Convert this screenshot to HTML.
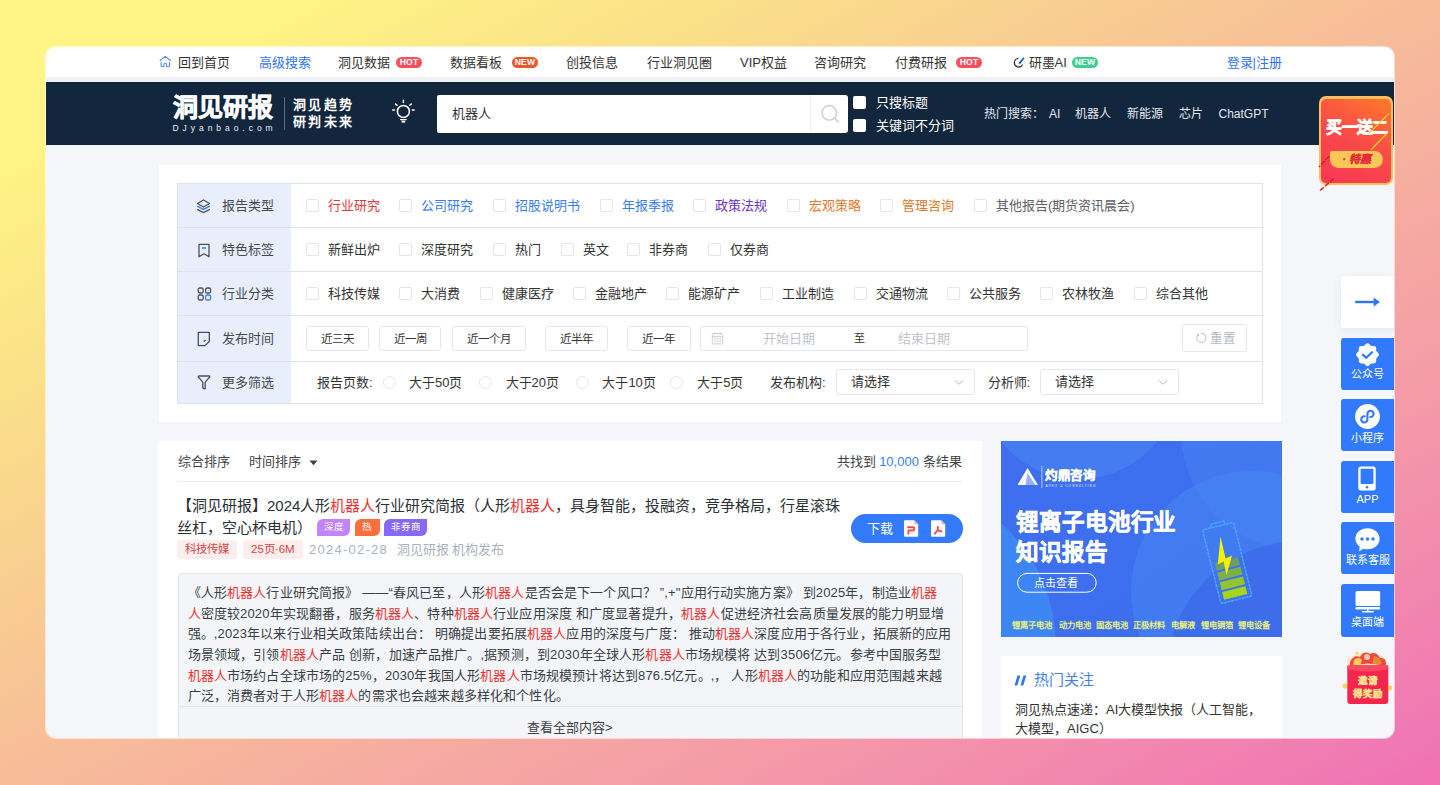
<!DOCTYPE html>
<html lang="zh-CN"><head><meta charset="utf-8">
<style>
*{box-sizing:border-box;margin:0;padding:0}
html,body{width:1440px;height:785px;overflow:hidden}
body{font-family:"Liberation Sans",sans-serif;background:linear-gradient(to bottom right,#fef586 0%,#fef384 11%,#fce987 18.3%,#fadf89 26%,#f7bc99 50%,#f49aa8 75%,#f078b3 96%,#f070b4 100%);position:relative;color:#333}
.win{position:absolute;left:46.3px;top:46.8px;width:1347.4px;height:691px;border-radius:10px;overflow:hidden;background:#f4f6f9;box-shadow:0 0 0 1px rgba(255,255,255,.55)}
.pg{position:absolute;left:-46.3px;top:-46.8px;width:1440px;height:785px}
.a{position:absolute;white-space:nowrap}
/* top nav */
.nav{position:absolute;left:46px;top:47px;width:1348px;height:30px;background:#fff}
.navgap{position:absolute;left:46px;top:77px;width:1348px;height:5px;background:#eef0f4}
.nv{position:absolute;top:55px;font-size:13px;line-height:16px;color:#333}
.badge{position:absolute;top:57px;height:10.5px;border-radius:6px;color:#fff;font-size:8.6px;line-height:11px;font-weight:bold;text-align:center;letter-spacing:.2px}
.hdr{position:absolute;left:46px;top:82px;width:1348px;height:63px;background:#12263e}
.hs{position:absolute;top:106px;font-size:12px;line-height:17px;color:#e3e7ee;white-space:nowrap}
.panel{position:absolute;left:158.5px;top:165px;width:1122.5px;height:257px;background:#fff}
.tbl{position:absolute;left:177.5px;top:183.5px;width:1085px;height:220.5px;border:1px solid #dfe4ee}
.lab{position:absolute;left:0;width:113.5px;background:#e8eefb}
.row{position:absolute;left:0;width:1083px;border-bottom:1px solid #dfe4ee}
.lb{position:absolute;left:222px;margin-top:0.8px;font-size:13px;line-height:18px;color:#454a52;white-space:nowrap}
.cb{position:absolute;width:13px;height:13px;border:1px solid #e3e5e9;border-radius:2px;background:#fff}
.rd{position:absolute;width:13px;height:13px;border:1px solid #e3e5e9;border-radius:50%;background:#fff}
.op{position:absolute;margin-top:0.8px;font-size:13px;line-height:18px;white-space:nowrap}
.bt{position:absolute;border:1px solid #e4e7ed;border-radius:3px;font-size:11.5px;line-height:24.6px;text-align:center;color:#333;background:#fff}
.card{position:absolute;left:158.3px;top:441px;width:823.7px;height:400px;background:#fff}
.t13{position:absolute;font-size:13px;line-height:18px;color:#3d4148;white-space:nowrap}
.tg{position:absolute;top:519px;height:16.7px;border-radius:6px 0 6px 0;color:#fff;font-size:9.5px;line-height:16.7px;text-align:center;white-space:nowrap}
.chip{position:absolute;top:539.6px;height:19.8px;border-radius:3px;background:#fdeeee;color:#d9433f;font-size:11.5px;line-height:19.8px;text-align:center;white-space:nowrap}
.sm{position:absolute;left:187.5px;font-size:13px;letter-spacing:0.15px;line-height:20.65px;color:#3a3f47;white-space:nowrap}
.sm b{font-weight:normal;color:#f0312f}
.banner{position:absolute;left:1001px;top:441px;width:280.5px;height:196px;background:#3d7cf1;overflow:hidden}
.hot{position:absolute;left:1000.5px;top:655.6px;width:281px;height:200px;background:#fff}
.sbt{position:absolute;left:1341px;width:53px;text-align:center;font-size:11px;line-height:16px;color:#fff;white-space:nowrap}
.sb{position:absolute;left:1341px;width:53px;border-radius:3px 0 0 3px;background:#307afb;color:#fff;font-size:11px;text-align:center}
</style></head><body>
<div class="win"><div class="pg">
<div class="nav"></div><div class="navgap"></div>
<svg class="a" style="left:159px;top:56px" width="12" height="12" viewBox="0 0 12 12"><path d="M1.1 4.5 L6.3 0.4 L11.5 4.5" fill="none" stroke="#4d88f5" stroke-width="1.05" stroke-linecap="round" stroke-linejoin="round"/><path d="M2.1 6.3 V10.2 Q2.1 10.8 2.7 10.8 H4.5 Q5 10.8 5 10.2 V8.8 Q5 7.3 6.3 7.3 Q7.6 7.3 7.6 8.8 V10.2 Q7.6 10.8 8.1 10.8 H9.9 Q10.5 10.8 10.5 10.2 V6.3" fill="none" stroke="#4d88f5" stroke-width="1.05" stroke-linecap="round" stroke-linejoin="round"/></svg>
<div class="nv" style="left:178px">回到首页</div>
<div class="nv" style="left:258.5px;color:#2f74f3">高级搜索</div>
<div class="nv" style="left:338px">洞见数据</div><div class="badge" style="left:396px;width:26px;background:#f8515d">HOT</div>
<div class="nv" style="left:450px">数据看板</div><div class="badge" style="left:512px;width:26px;background:#f0552a">NEW</div>
<div class="nv" style="left:565.5px">创投信息</div>
<div class="nv" style="left:646.5px">行业洞见圈</div>
<div class="nv" style="left:740px">VIP权益</div>
<div class="nv" style="left:814px">咨询研究</div>
<div class="nv" style="left:894.5px">付费研报</div><div class="badge" style="left:956px;width:26px;background:#f8515d">HOT</div>
<svg class="a" style="left:1013px;top:56px" width="12" height="12" viewBox="0 0 12 12"><path d="M5.33 2.42 A4.3 4.3 0 1 0 9.6 8.52" fill="none" stroke="#2a2a2a" stroke-width="1.15"/><path d="M5.6 6.9 L10.2 1.6 Q11.2 1.2 11.5 2.3 L7.6 7.6 Q6.4 8.4 5.6 6.9 Z" fill="#0b50d8"/></svg>
<div class="nv" style="left:1028.5px">研墨AI</div><div class="badge" style="left:1072px;width:26px;background:#3ccf8e">NEW</div>
<div class="nv" style="left:1226.5px;color:#2f74f3">登录|注册</div>
<div class="hdr"></div>
<div class="a" style="left:173px;top:89.5px;font-size:25px;line-height:34px;font-weight:900;color:#fff;letter-spacing:0px;-webkit-text-stroke:0.7px #fff">洞见研报</div>
<div class="a" style="left:172.5px;top:122px;font-size:8.5px;line-height:12px;color:#e8ecf2;letter-spacing:3.95px">DJyanbao.com</div>
<div class="a" style="left:284px;top:97px;width:1px;height:33px;background:#5d6b7e"></div>
<div class="a" style="left:293px;top:95.8px;font-size:13px;line-height:18px;font-weight:bold;color:#fff;letter-spacing:2.3px">洞见趋势</div>
<div class="a" style="left:293px;top:112.8px;font-size:13px;line-height:18px;font-weight:bold;color:#fff;letter-spacing:2.3px">研判未来</div>
<svg class="a" style="left:390px;top:99px" width="26" height="25" viewBox="0 0 26 25"><g fill="none" stroke="#fff" stroke-linecap="round"><circle cx="13.4" cy="12.4" r="6" stroke-width="1.55"/><path d="M10.6 20.6 H16.2" stroke-width="1.3"/><path d="M13.4 1.2 V3.4 M5.6 5.1 L7 6.3 M21.2 5.1 L19.8 6.3 M2.7 10.9 H4.4 M22.4 10.9 H24.1" stroke-width="1.5"/></g><rect x="11.6" y="21.7" width="3.6" height="1.9" fill="#fff"/></svg>
<div class="a" style="left:437px;top:95px;width:411px;height:37.5px;background:#fff;border-radius:2px 3px 3px 2px"></div>
<div class="a" style="left:810px;top:95px;width:1px;height:37.5px;background:#eef1f5"></div>
<svg class="a" style="left:819px;top:103px" width="22" height="22" viewBox="0 0 22 22"><circle cx="10.3" cy="9.8" r="7.3" fill="none" stroke="#c3cfdc" stroke-width="1.4"/><path d="M15.6 15.2 L19.2 19" stroke="#c3cfdc" stroke-width="1.6" stroke-linecap="round"/></svg>
<div class="a" style="left:452px;top:105px;font-size:13px;line-height:18px;color:#333">机器人</div>
<div class="a" style="left:852.5px;top:96px;width:13px;height:13px;background:#fff;border-radius:2px"></div>
<div class="a" style="left:852.5px;top:119.3px;width:13px;height:13px;background:#fff;border-radius:2px"></div>
<div class="a" style="left:875.5px;top:93.5px;font-size:13px;line-height:18px;color:#fff">只搜标题</div>
<div class="a" style="left:875.5px;top:117px;font-size:13px;line-height:18px;color:#fff">关键词不分词</div>
<div class="hs" style="left:984px">热门搜索：</div>
<div class="hs" style="left:1049px">AI</div>
<div class="hs" style="left:1075px">机器人</div>
<div class="hs" style="left:1126.5px">新能源</div>
<div class="hs" style="left:1178.5px">芯片</div>
<div class="hs" style="left:1218.5px">ChatGPT</div>
<div class="panel"></div>
<div class="a" style="left:177.5px;top:183.5px;width:113.5px;height:220px;background:#e8eefb"></div>
<div class="a" style="left:177px;top:183px;width:1085.5px;height:221px;border:1px solid #dde3ee"></div>
<div class="a" style="left:177.5px;top:226.8px;width:1085px;height:1px;background:#dde3ee"></div>
<div class="a" style="left:177.5px;top:270.8px;width:1085px;height:1px;background:#dde3ee"></div>
<div class="a" style="left:177.5px;top:314.7px;width:1085px;height:1px;background:#dde3ee"></div>
<div class="a" style="left:177.5px;top:360.8px;width:1085px;height:1px;background:#dde3ee"></div>
<svg class="a" style="left:196px;top:198.5px" width="15" height="15" viewBox="0 0 15 15"><path d="M7.5 1 L13.5 4.5 L7.5 8 L1.5 4.5 Z" fill="none" stroke="#4a505a" stroke-width="1.3" stroke-linejoin="round"/><path d="M1.6 7.4 L7.5 10.4 L13.4 7.4" fill="none" stroke="#3a7df2" stroke-width="1.3" stroke-linecap="round"/><path d="M1.6 10.6 L7.5 13.6 L13.4 10.6" fill="none" stroke="#4a505a" stroke-width="1.3" stroke-linecap="round"/></svg>
<div class="lb" style="top:196.4px">报告类型</div>
<svg class="a" style="left:197px;top:242.5px" width="14" height="15" viewBox="0 0 14 15"><path d="M2 1.4 H12 V13.8 L7 10.8 L2 13.8 Z" fill="none" stroke="#4a505a" stroke-width="1.3" stroke-linejoin="round"/><path d="M5 5 H9" stroke="#3a7df2" stroke-width="1.3"/></svg>
<div class="lb" style="top:240.3px">特色标签</div>
<svg class="a" style="left:196.5px;top:286.8px" width="15" height="14" viewBox="0 0 15 14"><g fill="none" stroke-width="1.3"><rect x="1.2" y="1" width="5" height="5" rx="1.6" stroke="#4a505a"/><rect x="8.6" y="1" width="5" height="5" rx="1.6" stroke="#4a505a"/><rect x="1.2" y="8" width="5" height="5" rx="1.6" stroke="#4a505a"/><rect x="8.6" y="8" width="5" height="5" rx="1.6" stroke="#3a7df2"/></g></svg>
<div class="lb" style="top:284.2px">行业分类</div>
<svg class="a" style="left:196.5px;top:331px" width="14" height="16" viewBox="0 0 14 16"><path d="M1.3 1.3 H12.3 V10.5 L8 14.6 H1.3 Z" fill="none" stroke="#4a505a" stroke-width="1.3" stroke-linejoin="round"/><path d="M7.2 11 V9.3 H9.2" fill="none" stroke="#3a7df2" stroke-width="1.3"/></svg>
<div class="lb" style="top:329.2px">发布时间</div>
<svg class="a" style="left:196.5px;top:375px" width="14" height="15" viewBox="0 0 14 15"><path d="M1.2 1.8 Q1.2 1 2 1 H12 Q12.8 1 12.8 1.8 L8.2 7.2 V13.2 Q8.2 14 7.4 13.8 L6.4 13.4 Q5.8 13.2 5.8 12.6 V7.2 Z" fill="none" stroke="#4a505a" stroke-width="1.3" stroke-linejoin="round"/></svg>
<div class="lb" style="top:373.4px">更多筛选</div>
<div class="cb" style="left:305.8px;top:198.9px"></div>
<div class="op" style="left:327.8px;top:196.4px;color:#de3b3b">行业研究</div>
<div class="cb" style="left:399.2px;top:198.9px"></div>
<div class="op" style="left:421.2px;top:196.4px;color:#3a7df2">公司研究</div>
<div class="cb" style="left:493px;top:198.9px"></div>
<div class="op" style="left:515.0px;top:196.4px;color:#3a7df2">招股说明书</div>
<div class="cb" style="left:599.5px;top:198.9px"></div>
<div class="op" style="left:621.5px;top:196.4px;color:#3a7df2">年报季报</div>
<div class="cb" style="left:692.9px;top:198.9px"></div>
<div class="op" style="left:714.9px;top:196.4px;color:#6b2fc7">政策法规</div>
<div class="cb" style="left:786.6px;top:198.9px"></div>
<div class="op" style="left:808.6px;top:196.4px;color:#e07a2a">宏观策略</div>
<div class="cb" style="left:880px;top:198.9px"></div>
<div class="op" style="left:902.0px;top:196.4px;color:#e07a2a">管理咨询</div>
<div class="cb" style="left:973.9px;top:198.9px"></div>
<div class="op" style="left:995.9px;top:196.4px;color:#5e6167">其他报告(期货资讯晨会)</div>
<div class="cb" style="left:305.8px;top:242.8px"></div>
<div class="op" style="left:327.8px;top:240.3px;color:#333">新鲜出炉</div>
<div class="cb" style="left:399.2px;top:242.8px"></div>
<div class="op" style="left:421.2px;top:240.3px;color:#333">深度研究</div>
<div class="cb" style="left:493px;top:242.8px"></div>
<div class="op" style="left:515.0px;top:240.3px;color:#333">热门</div>
<div class="cb" style="left:560.6px;top:242.8px"></div>
<div class="op" style="left:582.6px;top:240.3px;color:#333">英文</div>
<div class="cb" style="left:626.7px;top:242.8px"></div>
<div class="op" style="left:648.7px;top:240.3px;color:#333">非券商</div>
<div class="cb" style="left:708.4px;top:242.8px"></div>
<div class="op" style="left:730.4px;top:240.3px;color:#333">仅券商</div>
<div class="cb" style="left:305.8px;top:286.8px"></div>
<div class="op" style="left:327.8px;top:284.2px;color:#333">科技传媒</div>
<div class="cb" style="left:399.2px;top:286.8px"></div>
<div class="op" style="left:421.2px;top:284.2px;color:#333">大消费</div>
<div class="cb" style="left:479.7px;top:286.8px"></div>
<div class="op" style="left:501.7px;top:284.2px;color:#333">健康医疗</div>
<div class="cb" style="left:573px;top:286.8px"></div>
<div class="op" style="left:595.0px;top:284.2px;color:#333">金融地产</div>
<div class="cb" style="left:666.4px;top:286.8px"></div>
<div class="op" style="left:688.4px;top:284.2px;color:#333">能源矿产</div>
<div class="cb" style="left:760.4px;top:286.8px"></div>
<div class="op" style="left:782.4px;top:284.2px;color:#333">工业制造</div>
<div class="cb" style="left:853.8px;top:286.8px"></div>
<div class="op" style="left:875.8px;top:284.2px;color:#333">交通物流</div>
<div class="cb" style="left:946.9px;top:286.8px"></div>
<div class="op" style="left:968.9px;top:284.2px;color:#333">公共服务</div>
<div class="cb" style="left:1040.3px;top:286.8px"></div>
<div class="op" style="left:1062.3px;top:284.2px;color:#333">农林牧渔</div>
<div class="cb" style="left:1134.2px;top:286.8px"></div>
<div class="op" style="left:1156.2px;top:284.2px;color:#333">综合其他</div>
<div class="bt" style="left:305.7px;top:325.8px;width:63.2px;height:25.6px">近三天</div>
<div class="bt" style="left:378.8px;top:325.8px;width:62.7px;height:25.6px">近一周</div>
<div class="bt" style="left:451.7px;top:325.8px;width:74.1px;height:25.6px">近一个月</div>
<div class="bt" style="left:545.4px;top:325.8px;width:62.9px;height:25.6px">近半年</div>
<div class="bt" style="left:627.4px;top:325.8px;width:63.2px;height:25.6px">近一年</div>
<div class="a" style="left:700px;top:326.3px;width:327.5px;height:25px;border:1px solid #e4e7ed;border-radius:3px"></div>
<svg class="a" style="left:711px;top:332px" width="13" height="13" viewBox="0 0 13 13"><g fill="none" stroke="#c3c8d0" stroke-width="0.9"><rect x="1.3" y="1.5" width="10.4" height="10.4" rx="0.8"/><path d="M1.3 4.4 H11.7"/></g><g fill="#c3c8d0"><rect x="3" y="0.8" width="1.1" height="1.8"/><rect x="8.9" y="0.8" width="1.1" height="1.8"/><rect x="3.2" y="6" width="1.6" height="1.1"/><rect x="5.8" y="6" width="1.6" height="1.1"/><rect x="8.4" y="6" width="1.6" height="1.1"/><rect x="3.2" y="8.6" width="1.6" height="1.1"/><rect x="5.8" y="8.6" width="1.6" height="1.1"/><rect x="8.4" y="8.6" width="1.6" height="1.1"/></g></svg>
<div class="a" style="left:763px;top:329px;font-size:13px;line-height:19px;color:#c0c4cc">开始日期</div>
<div class="a" style="left:853.5px;top:330px;font-size:11px;line-height:17px;color:#333">至</div>
<div class="a" style="left:898px;top:329px;font-size:13px;line-height:19px;color:#c0c4cc">结束日期</div>
<div class="a" style="left:1182.2px;top:323.9px;width:64.8px;height:28.6px;border:1px solid #e6e8ec;border-radius:3px"></div>
<svg class="a" style="left:1194px;top:331px" width="13" height="13" viewBox="0 0 13 13"><path d="M4.2 3.6 A4.6 4.6 0 1 0 6.8 2.3" fill="none" stroke="#b9bec6" stroke-width="1"/><rect x="3.2" y="3" width="1.8" height="1.8" fill="#b9bec6"/></svg>
<div class="a" style="left:1209.5px;top:329.5px;font-size:12.5px;line-height:19px;color:#b4b9c2">重置</div>
<div class="op" style="left:317px;top:373.4px;color:#333">报告页数:</div>
<div class="rd" style="left:382.5px;top:375.9px"></div>
<div class="op" style="left:409px;top:373.4px;color:#333">大于50页</div>
<div class="rd" style="left:479.3px;top:375.9px"></div>
<div class="op" style="left:505.5px;top:373.4px;color:#333">大于20页</div>
<div class="rd" style="left:576.2px;top:375.9px"></div>
<div class="op" style="left:602.4px;top:373.4px;color:#333">大于10页</div>
<div class="rd" style="left:670.1px;top:375.9px"></div>
<div class="op" style="left:697.2px;top:373.4px;color:#333">大于5页</div>
<div class="op" style="left:770px;top:373.4px;color:#333">发布机构:</div>
<div class="op" style="left:987.5px;top:373.4px;color:#333">分析师:</div>
<div class="a" style="left:835.8px;top:369.4px;width:139.3px;height:25.3px;border:1px solid #e4e7ed;border-radius:3px"></div>
<div class="op" style="left:851.3px;top:372.4px;color:#333">请选择</div>
<svg class="a" style="left:954.1px;top:379px" width="10" height="7" viewBox="0 0 10 7"><path d="M1 1.3 L5 5.3 L9 1.3" fill="none" stroke="#b0b5bd" stroke-width="1"/></svg>
<div class="a" style="left:1039.6px;top:369.4px;width:139.7px;height:25.3px;border:1px solid #e4e7ed;border-radius:3px"></div>
<div class="op" style="left:1055.1px;top:372.4px;color:#333">请选择</div>
<svg class="a" style="left:1158.3px;top:379px" width="10" height="7" viewBox="0 0 10 7"><path d="M1 1.3 L5 5.3 L9 1.3" fill="none" stroke="#b0b5bd" stroke-width="1"/></svg>
<div class="card"></div>
<div class="t13" style="left:177.5px;top:452.5px">综合排序</div>
<div class="t13" style="left:249px;top:452.5px">时间排序</div>
<svg class="a" style="left:309px;top:460px" width="9" height="6" viewBox="0 0 9 6"><path d="M0.5 0.5 H8.5 L4.5 5.2 Z" fill="#3b414b"/></svg>
<div class="t13" style="left:836.5px;top:452.5px">共找到 <span style="color:#3a7df2">10,000</span> 条结果</div>
<div class="a" style="left:177px;top:481px;width:786px;height:1px;background:#e9ecf1"></div>
<div class="a" style="left:177px;top:495.3px;font-size:15px;line-height:22px;color:#2b2f36">【洞见研报】2024人形<span style="color:#f0312f">机器人</span>行业研究简报（人形<span style="color:#f0312f">机器人</span>，具身智能，投融资，竞争格局，行星滚珠<br>丝杠，空心杯电机）</div>
<div class="tg" style="left:317px;width:33.2px;background:#c384fb">深度</div>
<div class="tg" style="left:355px;width:24.6px;background:#fb6f3c">热</div>
<div class="tg" style="left:384.2px;width:42.9px;background:#8868f8">非券商</div>
<div class="chip" style="left:177.3px;width:59.7px">科技传媒</div>
<div class="chip" style="left:242.5px;width:60.8px">25页·6M</div>
<div class="a" style="left:309px;top:540.5px;font-size:13px;line-height:18px;letter-spacing:1.25px;color:#a8b2c0">2024-02-28</div>
<div class="a" style="left:396.5px;top:540.5px;font-size:13px;line-height:18px;color:#a8b2c0">洞见研报 机构发布</div>
<div class="a" style="left:851px;top:513.6px;width:112.2px;height:29.6px;border-radius:15px;background:#337bfc"></div>
<div class="a" style="left:866.5px;top:519.5px;font-size:13px;line-height:18px;color:#fff">下载</div>
<svg class="a" style="left:903px;top:520px" width="16" height="17" viewBox="0 0 16 17"><path d="M1 1.2 Q1 0.2 2 0.2 H11.2 L15.2 4.4 V15.8 Q15.2 16.8 14.2 16.8 H2 Q1 16.8 1 15.8 Z" fill="#fff"/><path d="M11.2 0.2 L15.2 4.4 H12.2 Q11.2 4.4 11.2 3.4 Z" fill="#f8b9b9"/><path d="M5 7.2 H10 Q11.4 7.2 11.4 8.7 Q11.4 10.3 10 10.5 H5.4 V13.8" fill="none" stroke="#f4474a" stroke-width="1.85" stroke-linecap="round" stroke-linejoin="round"/></svg>
<svg class="a" style="left:929.6px;top:520px" width="16" height="17" viewBox="0 0 16 17"><path d="M1 1.2 Q1 0.2 2 0.2 H11.2 L15.2 4.4 V15.8 Q15.2 16.8 14.2 16.8 H2 Q1 16.8 1 15.8 Z" fill="#fff"/><path d="M11.2 0.2 L15.2 4.4 H12.2 Q11.2 4.4 11.2 3.4 Z" fill="#f8b9b9"/><path d="M7.8 6.6 V10.2 L4.8 13.6 M7.8 10.2 L11.6 11.6" fill="none" stroke="#f4474a" stroke-width="1.85" stroke-linecap="round" stroke-linejoin="round"/></svg>
<div class="a" style="left:177.5px;top:572.5px;width:785.5px;height:200px;background:#f3f5f8;border:1px solid #e2e5ea;border-radius:4px"></div>
<div class="sm" style="top:583px">《人形<b>机器人</b>行业研究简报》 ——“春风已至，人形<b>机器人</b>是否会是下一个风口？ ”,+"应用行动实施方案》 到2025年，制造业<b>机器</b><br><b>人</b>密度较2020年实现翻番，服务<b>机器人</b>、特种<b>机器人</b>行业应用深度 和广度显著提升，<b>机器人</b>促进经济社会高质量发展的能力明显增<br>强。,2023年以来行业相关政策陆续出台： 明确提出要拓展<b>机器人</b>应用的深度与广度： 推动<b>机器人</b>深度应用于各行业，拓展新的应用<br>场景领域，引领<b>机器人</b>产品 创新，加速产品推广。,据预测，到2030年全球人形<b>机器人</b>市场规模将 达到3506亿元。参考中国服务型<br><b>机器人</b>市场约占全球市场的25%，2030年我国人形<b>机器人</b>市场规模预计将达到876.5亿元。,， 人形<b>机器人</b>的功能和应用范围越来越<br>广泛，消费者对于人形<b>机器人</b>的需求也会越来越多样化和个性化。</div>
<div class="a" style="left:178.5px;top:706px;width:783.5px;height:1px;background:#e2e5ea"></div>
<div class="a" style="left:527px;top:719px;font-size:13px;line-height:18px;color:#3a3f47">查看全部内容&gt;</div>
<div class="banner"><svg width="281" height="196" viewBox="0 0 281 196" style="position:absolute;left:0;top:0">
<defs><linearGradient id="bg1" x1="0" y1="0" x2="1" y2="1"><stop offset="0" stop-color="#3f6fee"/><stop offset="1" stop-color="#3b6eee"/></linearGradient>
<pattern id="dots" width="2" height="2" patternUnits="userSpaceOnUse"><rect width="1" height="1" fill="#5fa0ff"/></pattern></defs>
<rect width="281" height="196" fill="url(#bg1)"/>
<circle cx="78" cy="-62" r="100" fill="#4a86f5" opacity=".55"/>
<circle cx="300" cy="-10" r="120" fill="#4c8cf7" opacity=".35"/>
<circle cx="-110" cy="205" r="165" fill="#3e8ef4" opacity=".75"/>
<circle cx="250" cy="150" r="120" fill="#4a8af6" opacity=".45"/>
<circle cx="300" cy="235" r="135" fill="#3a63e6" opacity=".55"/>
<g transform="translate(16.5 27)"><path d="M10 0 L20.5 17 H0 Z" fill="#fff"/><path d="M10 5 L8 17 H18 Z" fill="#3f6fee" opacity=".55"/></g>
<rect x="40.5" y="25" width="0.8" height="22" fill="#cfe0ff"/>
<text x="44" y="38.5" font-size="12.5" font-weight="900" fill="#fff" stroke="#fff" stroke-width="0.4" font-family="Liberation Sans,sans-serif" letter-spacing="-0.5">灼鼎咨询</text>
<text x="44.5" y="45.5" font-size="3.2" fill="#e6efff" font-family="Liberation Sans,sans-serif" letter-spacing="1.05">APEX &amp; CONSULTING</text>
<text x="15" y="89" font-size="22.5" font-weight="900" fill="#fff" stroke="#fff" stroke-width="0.6" font-family="Liberation Sans,sans-serif" letter-spacing="-0.1">锂离子电池行业</text>
<text x="15" y="118.5" font-size="22.5" font-weight="900" fill="#fff" stroke="#fff" stroke-width="0.6" font-family="Liberation Sans,sans-serif" letter-spacing="-0.1">知识报告</text>
<rect x="16.6" y="132.4" width="78.6" height="18.8" rx="9.4" fill="none" stroke="#fff" stroke-width="1"/>
<text x="32.5" y="146" font-size="11" fill="#fff" font-family="Liberation Sans,sans-serif" letter-spacing="0.3">点击查看</text>
<g font-size="8.3" font-weight="bold" fill="#e4ee84" font-family="Liberation Sans,sans-serif">
<text x="11" y="186.5">锂离子电池</text><text x="57.5" y="186.5">动力电池</text><text x="94.5" y="186.5">固态电池</text><text x="132" y="186.5">正极材料</text><text x="170" y="186.5">电解液</text><text x="199.5" y="186.5">锂电铜箔</text><text x="236.5" y="186.5">锂电设备</text></g>
<g transform="translate(226 121) rotate(-14)">
<rect x="-16" y="-37" width="32" height="76" rx="2" fill="#3f7cf2" fill-opacity=".4" stroke="#4ea3ff" stroke-width="1.5" stroke-dasharray="3 0.7"/>
<path d="M-7 -37 V-40.5 H7 V-37" fill="none" stroke="#4ea3ff" stroke-width="1.4" stroke-dasharray="3 0.7"/>
<rect x="-12" y="-2" width="24" height="8" fill="#6e9e62"/>
<rect x="-12" y="8" width="24" height="8" fill="#7cb04a"/>
<rect x="-12" y="18" width="24" height="8" fill="#93c62a"/>
<rect x="-12" y="28" width="24" height="8" fill="#a5d61c"/>
</g>
<path d="M219.5 95.5 L224.6 117.5 L231 114.5 L225.5 134 L222.6 120.5 L216.8 123.5 Z" fill="#f4f000"/>
</svg></div>
<div class="hot"></div>
<svg class="a" style="left:1014px;top:675px" width="13" height="11" viewBox="0 0 13 11"><path d="M3.5 0.5 H6.3 L3.3 10.5 H0.5 Z M9.5 0.5 H12.3 L9.3 10.5 H6.5 Z" fill="#2f74f3"/></svg>
<div class="a" style="left:1034px;top:669px;font-size:15px;line-height:22px;color:#3f7ff3">热门关注</div>
<div class="a" style="left:1015px;top:700px;font-size:13px;line-height:19px;color:#333">洞见热点速递：AI大模型快报（人工智能，<br>大模型，AIGC）</div>
<div class="sb" style="top:276px;height:52px;background:#fff;box-shadow:0 2px 10px rgba(40,60,90,.07)"></div>
<svg class="a" style="left:1354px;top:296px" width="27" height="12" viewBox="0 0 27 12"><path d="M1.2 6 H22" stroke="#2f74f3" stroke-width="2.4"/><path d="M19.6 1.4 L26 6 L19.6 10.6 Z" fill="#2f74f3"/></svg>
<div class="sb" style="top:337.5px;height:52px"></div>
<svg class="a" style="left:1355px;top:343px" width="25" height="24" viewBox="0 0 25 24"><rect x="3.8" y="3" width="17.4" height="17.4" rx="2.4" fill="#fff"/><rect x="3.8" y="3" width="17.4" height="17.4" rx="2.4" fill="#fff" transform="rotate(45 12.5 11.7)"/><path d="M8 11.8 L11.3 14.8 L17 9.2" fill="none" stroke="#307afb" stroke-width="2.3" stroke-linecap="round" stroke-linejoin="round"/></svg>
<div class="sbt" style="top:366px">公众号</div>
<div class="sb" style="top:399px;height:52.4px"></div>
<svg class="a" style="left:1355px;top:403.5px" width="25" height="25" viewBox="0 0 25 25"><circle cx="12.5" cy="12.5" r="12.4" fill="#fff"/><path d="M9.6 12.3 A3.1 3.1 0 1 0 12.4 15.3 V9.9 A3.1 3.1 0 1 1 15.3 13" fill="none" stroke="#307afb" stroke-width="2.1" stroke-linecap="round"/></svg>
<div class="sbt" style="top:429.5px">小程序</div>
<div class="sb" style="top:461px;height:52px"></div>
<svg class="a" style="left:1358px;top:466px" width="18" height="25" viewBox="0 0 18 25"><rect x="0.3" y="0.5" width="17.4" height="24" rx="2.5" fill="#fff"/><rect x="2.6" y="2.8" width="12.8" height="15.2" rx="0.8" fill="#307afb"/><circle cx="9" cy="21.2" r="1.3" fill="#307afb"/></svg>
<div class="sbt" style="top:491px">APP</div>
<div class="sb" style="top:522.2px;height:52.3px"></div>
<svg class="a" style="left:1354.5px;top:528px" width="25" height="24" viewBox="0 0 25 24"><path d="M12.5 0.3 C19.3 0.3 24.6 4.9 24.6 10.8 C24.6 16.7 19.3 21.3 12.5 21.3 C11 21.3 9.6 21.1 8.3 20.7 L4.2 23.6 L4.6 18.6 C2 16.6 0.4 13.9 0.4 10.8 C0.4 4.9 5.7 0.3 12.5 0.3 Z" fill="#fff"/><circle cx="7" cy="11" r="1.75" fill="#307afb"/><circle cx="12.5" cy="11" r="1.75" fill="#307afb"/><circle cx="18" cy="11" r="1.75" fill="#307afb"/></svg>
<div class="sbt" style="top:552.3px">联系客服</div>
<div class="sb" style="top:584.2px;height:52.6px"></div>
<svg class="a" style="left:1354.5px;top:591px" width="26" height="22" viewBox="0 0 26 22"><rect x="0.5" y="0.1" width="24.7" height="14.9" rx="1.6" fill="#fff"/><rect x="0.5" y="16" width="24.7" height="2.4" rx="1.2" fill="#fff"/><rect x="12" y="18.3" width="1.7" height="1.8" fill="#fff"/><rect x="6.8" y="19.9" width="12.1" height="1.6" rx="0.8" fill="#fff"/></svg>
<div class="sbt" style="top:613.5px">桌面端</div>
<svg class="a" style="left:1340px;top:648px" width="54" height="58" viewBox="0 0 54 58">
<ellipse cx="27" cy="14" rx="20" ry="9" fill="#fbd4a0" opacity=".5"/>
<path d="M10 14 Q14 6 20 9 Q24 2 30 6 Q36 3 40 10 Q46 9 46 16 L44 20 H10 Z" fill="#f0473c"/>
<path d="M14 12 Q18 8 22 12 L20 18 H13 Z" fill="#ffcf5a"/>
<path d="M34 8 Q40 9 42 15 L38 18 H32 Z" fill="#e8883a"/>
<circle cx="27" cy="9" r="3" fill="#f6c8a8"/><circle cx="5" cy="38" r="2.6" fill="#ffd35a"/><circle cx="50" cy="40" r="2.4" fill="#ffd35a"/><circle cx="17" cy="5" r="1.6" fill="#ffd35a"/>
<path d="M14 18 Q28 13 42 18 L40 20 H16 Z" fill="#ffe0b8"/><rect x="7.3" y="17.3" width="41" height="38.6" rx="3" fill="#f5264e"/>
<path d="M7.3 17.3 H48.3 V21 Q28 26 7.3 21 Z" fill="#fb4a60"/>
<text x="27.8" y="35.5" text-anchor="middle" font-size="9.5" font-weight="900" fill="#ffe08e" stroke="#ffe08e" stroke-width="0.25" font-family="Liberation Sans,sans-serif">邀请</text>
<text x="27.8" y="48.5" text-anchor="middle" font-size="9.5" font-weight="900" fill="#ffe08e" stroke="#ffe08e" stroke-width="0.25" font-family="Liberation Sans,sans-serif">得奖励</text>
</svg>
<div class="a" style="left:1319.3px;top:96.4px;width:73.8px;height:88.8px;border-radius:7px;background:#fcc15e;padding:2.2px">
<div style="position:relative;width:100%;height:100%;border-radius:5px;background:linear-gradient(30deg,#f73755 0%,#fa4a48 50%,#fd7a2c 100%);overflow:hidden">

<div style="position:absolute;left:5px;top:18px;font-size:16px;line-height:22px;font-weight:900;color:#fff;letter-spacing:-0.8px;white-space:nowrap;-webkit-text-stroke:0.7px #fff">买一送二</div>
<div style="position:absolute;left:9px;top:52px;width:52.5px;height:17.3px;border-radius:2px 9px 9px 9px;background:#fdc757;color:#e62a3a;font-size:11px;line-height:17.3px;font-weight:900;text-align:center;white-space:nowrap;font-style:italic;-webkit-text-stroke:0.3px #e62a3a">· 特惠</div>
</div><svg style="position:absolute;left:0;top:0;overflow:visible" width="74" height="96" viewBox="0 0 74 96"><path d="M69.9 17.5 L50.3 37.1 M67.2 38 L52 54" stroke="#ffd21a" stroke-width="1.2"/><path d="M10.1 60.3 L0 71 M14.6 82.6 L0.3 95.1" stroke="#d61c2a" stroke-width="1.4" stroke-dasharray="5 1.5"/></svg></div>
</div></div>
</body></html>
